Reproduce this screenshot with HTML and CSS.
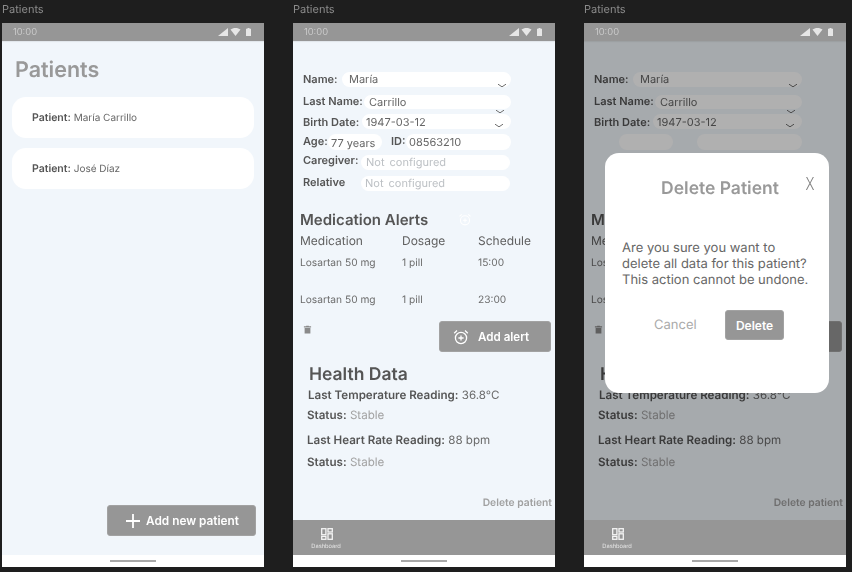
FILE: index.html
```html
<!DOCTYPE html>
<html lang="en">
<head>
<meta charset="utf-8">
<title>Patients</title>
<link rel="stylesheet" href="styles.css">
</head>
<body>
<svg class="defs" width="0" height="0" aria-hidden="true">
  <symbol id="i-signal" viewBox="0 0 10 8"><path d="M10 0V8H0Z" fill="currentColor"/></symbol>
  <symbol id="i-wifi" viewBox="0 0 10 8"><path d="M0 1.6C1.3.6 3 0 5 0s3.700.6 5 1.600L5 8Z" fill="currentColor"/></symbol>
  <symbol id="i-battery" viewBox="0 0 5 8"><path d="M1.500 0h2v.8H5V8H0V.8h1.500Z" fill="currentColor"/></symbol>
  <symbol id="i-chevron" viewBox="0 0 10 5"><path d="M1 1.200L5 3.800L9 1.200" fill="none" stroke="currentColor" stroke-width="1"/></symbol>
  <symbol id="i-alarm" viewBox="0 0 16 16"><g fill="none" stroke="currentColor" stroke-width="1.300"><circle cx="8" cy="9" r="5.600"/><path d="M8 6.400v5.200M5.400 9h5.200M1.200 4.200L4 1.600M14.800 4.200L12 1.600"/></g></symbol>
  <symbol id="i-trash" viewBox="0 0 10 10"><path d="M1 1.500h2.500V.8h3v.7H9v1.200H1ZM1.800 3.300h6.400V9.500H1.800Z" fill="currentColor"/></symbol>
  <symbol id="i-dash" viewBox="0 0 12 12"><g fill="none" stroke="currentColor" stroke-width="1.300"><rect x=".7" y=".7" width="4.200" height="6"/><rect x="7" y=".7" width="4.300" height="3.300"/><rect x=".7" y="8.400" width="4.200" height="2.900"/><rect x="7" y="5.800" width="4.300" height="5.500"/></g></symbol>
</svg>

<div class="canvas">
  <section class="artboard">
    <div class="artboard-label">Patients</div>
    <div class="phone">
      <div class="status">
        <span class="clock">10:00</span>
        <span class="status-icons">
          <svg class="ic-signal"><use href="#i-signal"/></svg>
          <svg class="ic-wifi"><use href="#i-wifi"/></svg>
          <svg class="ic-battery"><use href="#i-battery"/></svg>
        </span>
      </div>
      <main class="screen list-screen">
        <h1 class="page-title">Patients</h1>
        <div class="patient-card"><b>Patient:</b> María Carrillo</div>
        <div class="patient-card"><b>Patient:</b> José Díaz</div>
        <button class="action-btn add-patient" type="button">
          <svg class="ic-plus" viewBox="0 0 14 14"><path d="M7 0V14M0 7H14" stroke="currentColor" stroke-width="1.800"/></svg>
          Add new patient
        </button>
      </main>
      <div class="gesture"><span class="gesture-bar"></span></div>
    </div>
  </section>

  <section class="artboard">
    <div class="artboard-label">Patients</div>
    <div class="phone">
      <div class="status">
        <span class="clock">10:00</span>
        <span class="status-icons">
          <svg class="ic-signal"><use href="#i-signal"/></svg>
          <svg class="ic-wifi"><use href="#i-wifi"/></svg>
          <svg class="ic-battery"><use href="#i-battery"/></svg>
        </span>
      </div>
      <main class="screen detail-screen">
        <div class="form">
          <div class="row row-name"><span class="label lb-name">Name:</span><span class="pill">María</span><svg class="chev chev-1"><use href="#i-chevron"/></svg></div>
          <div class="row row-last"><span class="label lb-last">Last Name:</span><span class="pill pill-last">Carrillo</span><svg class="chev chev-2"><use href="#i-chevron"/></svg></div>
          <div class="row row-birth"><span class="label lb-birth">Birth Date:</span><span class="pill pill-tight">1947-03-12</span><svg class="chev chev-3"><use href="#i-chevron"/></svg></div>
          <div class="row row-age"><span class="label lb-age">Age:</span><span class="pill pill-age">77 years</span><span class="label lb-id">ID:</span><span class="pill pill-id">08563210</span></div>
          <div class="row row-care"><span class="label lb-care">Caregiver:</span><span class="pill pill-muted">Not configured</span></div>
          <div class="row row-rel"><span class="label lb-rel">Relative</span><span class="pill pill-muted">Not configured</span></div>
        </div>
        <div class="alerts">
          <h2 class="alerts-title">Medication Alerts<svg class="ghost-alarm"><use href="#i-alarm"/></svg></h2>
          <div class="med-grid med-head"><span>Medication</span><span>Dosage</span><span>Schedule</span></div>
          <div class="med-grid med-row"><span>Losartan 50 mg</span><span>1 pill</span><span>15:00</span></div>
          <div class="med-grid med-row med-row-2"><span>Losartan 50 mg</span><span>1 pill</span><span>23:00</span></div>
        </div>
        <div class="alert-actions">
          <svg class="ic-trash"><use href="#i-trash"/></svg>
          <button class="action-btn add-alert" type="button"><svg class="ic-alarm"><use href="#i-alarm"/></svg>Add alert</button>
        </div>
        <div class="health">
          <h2 class="health-title">Health Data</h2>
          <p class="stat stat-temp"><b>Last Temperature Reading:</b> 36.8°C</p>
          <p class="stat stat-s1"><b>Status:</b> <span class="ok">Stable</span></p>
          <p class="stat stat-heart"><b>Last Heart Rate Reading:</b> 88 bpm</p>
          <p class="stat stat-s2"><b>Status:</b> <span class="ok">Stable</span></p>
        </div>
        <div class="delete-link">Delete patient</div>
      </main>
      <nav class="nav"><span class="nav-item"><svg class="ic-dash"><use href="#i-dash"/></svg>Dashboard</span></nav>
      <div class="gesture"><span class="gesture-bar"></span></div>
    </div>
  </section>

  <section class="artboard">
    <div class="artboard-label">Patients</div>
    <div class="phone">
      <div class="status">
        <span class="clock">10:00</span>
        <span class="status-icons">
          <svg class="ic-signal"><use href="#i-signal"/></svg>
          <svg class="ic-wifi"><use href="#i-wifi"/></svg>
          <svg class="ic-battery"><use href="#i-battery"/></svg>
        </span>
      </div>
      <main class="screen detail-screen has-modal">
        <div class="form">
          <div class="row row-name"><span class="label lb-name">Name:</span><span class="pill">María</span><svg class="chev chev-1"><use href="#i-chevron"/></svg></div>
          <div class="row row-last"><span class="label lb-last">Last Name:</span><span class="pill pill-last">Carrillo</span><svg class="chev chev-2"><use href="#i-chevron"/></svg></div>
          <div class="row row-birth"><span class="label lb-birth">Birth Date:</span><span class="pill pill-tight">1947-03-12</span><svg class="chev chev-3"><use href="#i-chevron"/></svg></div>
          <div class="row row-age"><span class="label lb-age"></span><span class="pill pill-age"></span><span class="label lb-id"></span><span class="pill pill-id"></span></div>
          <div class="row row-care"></div>
          <div class="row row-rel"></div>
        </div>
        <div class="alerts">
          <h2 class="alerts-title">Medication Alerts</h2>
          <div class="med-grid med-head"><span>Medication</span><span>Dosage</span><span>Schedule</span></div>
          <div class="med-grid med-row"><span>Losartan 50 mg</span><span>1 pill</span><span>15:00</span></div>
          <div class="med-grid med-row med-row-2"><span>Losartan 50 mg</span><span>1 pill</span><span>23:00</span></div>
        </div>
        <div class="alert-actions">
          <svg class="ic-trash"><use href="#i-trash"/></svg>
          <button class="action-btn add-alert" type="button"><svg class="ic-alarm"><use href="#i-alarm"/></svg>Add alert</button>
        </div>
        <div class="health">
          <h2 class="health-title">Health Data</h2>
          <p class="stat stat-temp"><b>Last Temperature Reading:</b> 36.8°C</p>
          <p class="stat stat-s1"><b>Status:</b> <span class="ok">Stable</span></p>
          <p class="stat stat-heart"><b>Last Heart Rate Reading:</b> 88 bpm</p>
          <p class="stat stat-s2"><b>Status:</b> <span class="ok">Stable</span></p>
        </div>
        <div class="delete-link">Delete patient</div>
        <div class="scrim"></div>
        <div class="modal">
          <div class="modal-head">
            <h2 class="modal-title">Delete Patient</h2>
            <span class="modal-close">X</span>
          </div>
          <p class="modal-text">Are you sure you want to<br>delete all data for this patient?<br>This action cannot be undone.</p>
          <div class="modal-actions">
            <span class="modal-cancel">Cancel</span>
            <button class="action-btn modal-delete" type="button">Delete</button>
          </div>
        </div>
      </main>
      <nav class="nav"><span class="nav-item"><svg class="ic-dash"><use href="#i-dash"/></svg>Dashboard</span></nav>
      <div class="gesture"><span class="gesture-bar"></span></div>
    </div>
  </section>
</div>
</body>
</html>
```
FILE: styles.css
```css
* { box-sizing: border-box; }
html, body { margin: 0; padding: 0; }
body {
  width: 852px;
  height: 572px;
  overflow: hidden;
  background: #1e1e1e;
  font-family: Inter, "Liberation Sans", sans-serif;
  color: #5a5a5a;
  text-rendering: geometricPrecision;
}
.defs { position: absolute; }
.canvas { display: flex; gap: 29px; padding-left: 2px; will-change: opacity; }
.artboard { width: 262px; flex: none; }
.artboard-label {
  height: 23px;
  font-size: 11px;
  line-height: 18px;
  color: #8b8b8b;
}
.phone { width: 262px; height: 544px; display: flex; flex-direction: column; background: #fff; }

.status {
  height: 18px;
  flex: none;
  display: flex;
  align-items: center;
  justify-content: space-between;
  padding: 0 13px 0 11px;
  background: #969696;
  color: #e6e6e6;
  box-shadow: 0 1px 1px rgba(0, 0, 0, .06);
  position: relative;
  z-index: 1;
}
.clock { font-size: 9.500px; font-weight: 300; line-height: 18px; padding-top: 1px; color: #d6d6d6; }
.status-icons { display: flex; align-items: center; gap: 2px; }
.ic-signal { width: 10px; height: 8px; }
.ic-wifi { width: 11px; height: 8px; margin-right: 3px; }
.ic-battery { width: 5px; height: 8px; }

.screen { flex: 1; position: relative; background: #f1f6fb; min-height: 0; overflow: hidden; }
.gesture { height: 12px; flex: none; background: #fff; display: flex; justify-content: center; align-items: flex-start; padding-top: 5px; }
.gesture-bar { width: 46px; height: 2px; background: #a8a8a8; }

.action-btn {
  display: flex;
  align-items: center;
  justify-content: center;
  border: 1px solid #a2a2a2;
  border-radius: 3px;
  background: #969696;
  color: #fff;
  font-family: inherit;
  font-weight: 600;
  padding: 0;
}

/* list screen */
.list-screen { display: flex; flex-direction: column; padding: 0 10px 19px; }
.page-title { margin: 16px 0 13px 3px; height: 27px; font-size: 21.500px; line-height: 27px; font-weight: 600; color: #999; }
.patient-card {
  height: 41px;
  margin-bottom: 10px;
  padding-left: 20px;
  border-radius: 14px;
  background: #fff;
  font-size: 10px;
  line-height: 41px;
  color: #666;
}
.patient-card b { font-size: 10.500px; font-weight: 600; color: #555; }
.add-patient { width: 149px; height: 31px; margin: auto -2px 0 auto; padding-left: 2px; font-size: 11.800px; gap: 6px; }
.ic-plus { width: 14px; height: 14px; }

/* detail screen */
.detail-screen { display: flex; flex-direction: column; }
.form { margin: 31px 0 0 10px; width: 208px; }
.row { display: flex; align-items: center; position: relative; height: 15px; font-size: 11px; }
.row-last { margin-top: 7.500px; height: 14.500px; }
.row-birth { margin-top: 5px; }
.row-age { margin-top: 5px; height: 16px; }
.row-care { margin-top: 5px; }
.row-rel { margin-top: 6px; }
.label { flex: none; font-weight: 600; color: #555; line-height: 15px; }
.lb-name { width: 39px; }
.lb-last { width: 61px; }
.lb-birth { width: 59px; margin-top: 1px; }
.row-birth .pill { line-height: 17px; }
.lb-age { width: 25px; margin-top: -1px; }
.lb-id { width: 15px; margin: -1px 0 0 9px; }
.lb-care { width: 58px; margin-top: -5px; }
.lb-rel { width: 58px; margin-top: -3px; }
.pill {
  flex: 1;
  height: 100%;
  padding-left: 7px;
  border-radius: 8px;
  background: #fff;
  color: #666;
  font-size: 11px;
  line-height: 15px;
}
.pill-last { padding-left: 5px; }
.pill-tight { padding-left: 4px; }
.pill-age { flex: none; width: 54px; padding: 2px 0 0 3px; }
.pill-id { padding: 1px 0 0 3px; margin-top: -1px; }
.pill-muted { padding-left: 5px; margin-right: 1px; color: #bdc1c5; word-spacing: 2px; }
.row-rel .pill-muted { padding-left: 4px; }
.chev { position: absolute; width: 10px; height: 5px; color: #707070; }
.chev-1 { left: 194px; top: 11px; }
.chev-2 { left: 192px; top: 14px; }
.chev-3 { left: 191px; top: 9px; }

.alerts { margin: 20px 0 0 7px; }
.alerts-title { position: relative; margin: 0; height: 17px; font-size: 15px; line-height: 17px; font-weight: 600; color: #555; }
.ghost-alarm { position: absolute; left: 158px; top: 2px; width: 14px; height: 13px; color: #fff; }
.med-grid { display: grid; grid-template-columns: 102px 76px 1fr; }
.med-head { margin-top: 5px; height: 16px; font-size: 12px; line-height: 16px; color: #5f5f5f; }
.med-row { margin-top: 7px; height: 15px; font-size: 10.200px; line-height: 15px; color: #6c6c6c; }
.med-row-2 { margin-top: 22px; }

.alert-actions { display: flex; justify-content: space-between; margin: 13px 4px 0 10px; height: 31px; }
.ic-trash { width: 9px; height: 9px; margin-top: 4px; color: #8a8a8a; }
.add-alert { width: 112px; height: 31px; font-size: 11.600px; gap: 9px; justify-content: flex-start; padding-left: 13px; }
.ic-alarm { width: 16px; height: 16px; }

.health { margin: 12px 0 0 14px; }
.health-title { margin: 0 0 0 2px; height: 22px; font-size: 17.500px; line-height: 22px; font-weight: 600; color: #555; }
.stat { margin: 0; height: 15px; font-size: 11.600px; line-height: 15px; color: #6a6a6a; white-space: nowrap; }
.stat b { font-weight: 600; color: #555; }
.stat-temp { margin: 2px 0 0 1px; }
.stat-s1 { margin-top: 5px; }
.stat-heart { margin-top: 10px; }
.stat-s2 { margin-top: 7px; }
.ok { color: #a2a2a2; }
.delete-link { margin: 26px 3px 0 0; text-align: right; font-size: 10.300px; line-height: 15px; font-weight: 600; color: #a0a0a0; }

.nav { height: 35px; flex: none; display: flex; background: #969696; padding-left: 18px; }
.nav-item { display: flex; flex-direction: column; align-items: center; padding-top: 8px; width: 30px; font-size: 5.700px; line-height: 7px; color: #e8e8e8; white-space: nowrap; }
.ic-dash { width: 12px; height: 12px; margin: 0 0 3px 1px; color: #f4f4f4; }

/* modal */
.scrim { position: absolute; inset: 0; background: rgba(0, 0, 0, .31); }
.modal {
  position: absolute;
  left: 21px;
  top: 112px;
  width: 224px;
  height: 240px;
  padding: 0 17px;
  border-radius: 14px;
  background: #fff;
}
.modal-head { position: relative; height: 71px; padding-top: 25px; text-align: center; }
.modal-title { margin: 0; font-size: 17.500px; line-height: 22px; font-weight: 600; color: #999; padding-left: 6px; }
.modal-close { position: absolute; right: -4px; top: 21px; font-size: 18px; line-height: 22px; font-weight: 300; color: #808080; transform: scaleX(.75); }
.modal-text { margin: 16px 0 0; font-size: 13px; line-height: 16px; color: #666; white-space: nowrap; }
.modal-actions { display: flex; align-items: center; margin-top: 22px; padding-left: 32px; }
.modal-cancel { width: 71px; font-size: 13px; color: #aaa; }
.modal-delete { width: 59px; height: 30px; font-size: 12px; }
```
